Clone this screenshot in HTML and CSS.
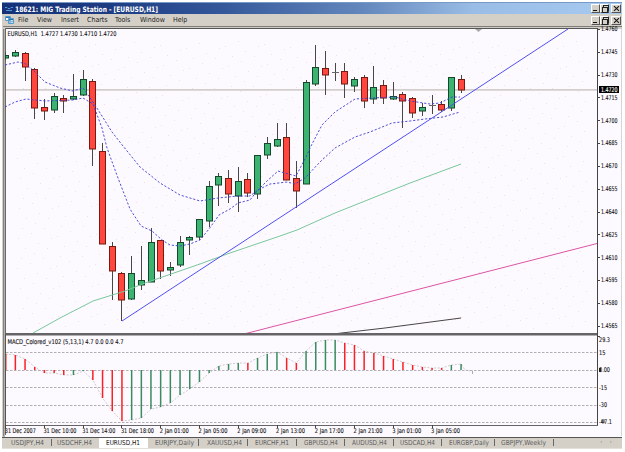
FILE: index.html
```html
<!DOCTYPE html>
<html lang="en">
<head>
<meta charset="utf-8">
<title>18621: MIG Trading Station</title>
<link rel="stylesheet" href="styles.css">
</head>
<body>
<div class="window">
  <header class="titlebar">
    <svg class="logo" width="8" height="6" viewBox="0 0 8 6"><path d="M0 1.5h2l1 1h2l1-1h2M1 4.5h6" stroke="#5594d8" fill="none"/></svg>
    <h1><svg width="150" height="11"><text x="0" y="8.5" textLength="143" lengthAdjust="spacingAndGlyphs">18621: MIG Trading Station - [EURUSD,H1]</text></svg></h1>
    <div class="controls"><button class="min"></button><button class="restore"></button><button class="close"></button></div>
  </header>
  <nav class="menubar">
    <svg class="app-icon" width="9" height="10" viewBox="0 0 9 10"><path d="M.5 1.5h5v4h-5zM3.5 3.5h5v5h-5z" fill="#fff" stroke="#529bce"/><path d="M1 2.5h4M4 4.5h4M5 6v2M7 5.5v2" stroke="#286fae"/></svg>
    <span class="m-file">File</span><span class="m-view">View</span><span class="m-insert">Insert</span><span class="m-charts">Charts</span><span class="m-tools">Tools</span><span class="m-window">Window</span><span>Help</span>
    <div class="controls"><button class="min"></button><button class="restore"></button><button class="close"></button></div>
  </nav>
  <main><svg id="chart" width="620" height="411" viewBox="2 26 620 411"></svg></main>
  <footer class="tabs" id="tabs"></footer>
</div>
<script src="chart.js"></script>
</body>
</html>
```
FILE: styles.css
```css
* { box-sizing: border-box; }
body { margin: 0; background: #fff; font-family: "DejaVu Sans Condensed", "DejaVu Sans", sans-serif; }
.window { margin: 2px 0 0 2px; width: 620px; height: 448px; display: flex; flex-direction: column; }
.titlebar { height: 12px; display: flex; align-items: center; border-top: 1px solid #7898c5; padding: 0 1px 0 3px; background: linear-gradient(90deg, #153278 0%, #1d3c82 17%, #34579a 35%, #6387bc 58%, #9abde6 76%, #a6caf0 100%); }
.logo { margin-right: 2px; }
h1 { margin: 0; height: 11px; display: flex; flex: 1; }
h1 svg { overflow: visible; }
h1 text { font: bold 7.4px "DejaVu Sans Condensed", sans-serif; fill: #fff; }
.menubar { height: 12px; display: flex; align-items: center; padding: 0 1px 0 3px; background: #d4d0c8; color: #222; font-size: 7px; }
.menubar span { white-space: nowrap; height: 9px; line-height: 8px; }
.app-icon { margin-right: 4px; }
.m-file { width: 19px; }
.m-view { width: 24px; }
.m-insert { width: 26px; }
.m-charts { width: 28px; }
.m-tools { width: 25px; }
.m-window { width: 33px; }
.controls { display: flex; margin-left: auto; gap: 0; }
.controls button { width: 9px; height: 9px; padding: 0; border: 1px solid; border-color: #fff #555 #555 #fff; background: #d4d0c8; position: relative; }
.controls .close { margin-left: 2px; width: 10px; }
.min::before { content: ""; position: absolute; left: 1px; bottom: 1px; width: 4px; height: 1px; background: #111; }
.restore::before, .restore::after { content: ""; position: absolute; width: 4px; height: 4px; border: 1px solid #222; background: #d4d0c8; left: 2px; top: 0; }
.restore::after { left: 1px; top: 2px; }
.close::before, .close::after { content: ""; position: absolute; width: 7px; height: 1px; background: #111; left: 0.5px; top: 3px; transform: rotate(45deg); }
.close::after { transform: rotate(-45deg); }
main { height: 411px; display: flex; }
#chart text { font: 6.5px "DejaVu Sans Condensed", sans-serif; fill: #151515; stroke: #151515; stroke-width: 0.12px; }
#chart .current { fill: #fff; stroke: #fff; }
.tabs { height: 12px; display: flex; border-top: 1px solid #555; background: #d4d0c8; border-bottom: 1px solid #e3e0dc; }
.tabs svg { display: block; }
.tabs text { font: 6.8px "DejaVu Sans Condensed", sans-serif; fill: #5c5c5c; }
.tabs .active text { fill: #111; }
.tabs .active { background: #fff; }
.arrows { margin-left: auto; width: 22px; display: flex; gap: 7px; color: #999; font-size: 7px; line-height: 9px; }
```
FILE: chart.js
```js
const svg = document.getElementById('chart');
const out = [];
const xAt = i => 5.7 + 9.69 * i;
const line = (x1, y1, x2, y2, c, extra = '') => out.push(`<line x1="${x1}" y1="${y1}" x2="${x2}" y2="${y2}" stroke="${c}" ${extra}/>`);
const rect = (x, y, w, h, c, extra = '') => out.push(`<rect x="${x}" y="${y}" width="${w}" height="${h}" fill="${c}" ${extra}/>`);
const text = (x, y, w, s, cls = '') => out.push(`<text x="${x}" y="${y}" textLength="${w}" lengthAdjust="spacingAndGlyphs" class="${cls}">${s}</text>`);

// frame and background
rect(2, 26, 620, 411, '#fdfaff');
rect(2, 26, 3, 411, '#b5b2ad');
rect(2, 26, 1, 411, '#d4d0c8');
rect(3, 26, 1, 410, '#85827f');
rect(3, 26, 619, 3, '#d0cdc8');
rect(3, 26, 619, 1, '#807d79');
rect(5, 28, 593, 1, '#555');
rect(5, 28, 1, 407, '#6a6868');
rect(621, 29, 1, 407, '#d6d4d8');

// speckled backdrop
for (let r = 0; r < 29; r++) for (let c = 0; c < 44; c++) {
  const x = 17 + c * 13 + (r * 7) % 11, y = 48 + r * 10 - (c * 5) % 13;
  if (x < 595 && y > 40 && y < 332) rect(x, y, 1, 1, '#f9dce9');
}

// current price
rect(6, 89, 591, 1, '#d2cecc');
rect(6, 90, 591, 1, '#dedada');

// high, low, body top, body bottom, direction
const candles = [
[52,60,55,58,1],[50,57,52,56,1],[52,81,53,67,0],[68,119,69,108,0],[99,120,107,111,0],[93,113,96,110,1],[95,113,98,101,0],[74,100,96,99,1],[70,96,79,95,1],[79,166,81,149,0],
[143,244,151,244,0],[242,300,246,271,0],[272,321,273,300,0],[256,300,273,299,1],[246,290,280,285,1],[228,282,242,282,1],[240,279,240,271,0],[262,276,267,270,1],[236,267,242,265,1],[236,255,237,240,1],
[219,240,219,237,1],[181,227,186,221,1],[173,206,176,185,1],[170,203,178,194,0],[167,212,181,196,1],[173,197,179,193,0],[155,199,155,194,1],[137,159,143,155,1],[123,147,139,146,1],[123,180,137,180,0],
[161,208,178,191,0],[80,184,82,184,1],[45,86,67,84,1],[51,95,68,75,0],[63,81,72,73,1],[63,98,71,84,0],[77,92,79,86,1],[75,108,77,101,0],[66,104,87,99,1],[80,104,85,98,0],
[82,100,96,99,1],[92,128,94,101,0],[97,118,98,113,0],[103,116,107,111,1],[95,114,105,106,1],[101,112,104,110,0],[77,111,77,108,1],[75,93,79,90,0]];
candles.forEach(([h, l, t, b, up], i) => {
  const x = Math.round(xAt(i) - 0.5);
  rect(x, h, 1, l - h, '#4a4644');
  if (b - t < 2) { rect(x - 3, t, 7, 1, '#6b6764'); return; }
  const left = Math.max(5.5, x - 2.5), right = x + 3.5;
  rect(left, t + 0.5, right - left, b - t - 0.5, up ? '#3cb371' : '#ff4740', `stroke="${up ? '#14472b' : '#751b10'}"`);
});

// averages and trend lines
const poly = (pts, c, extra = '') => out.push(`<polyline points="${pts}" fill="none" stroke="${c}" ${extra}/>`);
const dash = 'stroke-dasharray="2.2 1.8" stroke-width=".9"';
poly('5,65 18,62 26,64 35,72 45,82 60,88 73,91 83,88 93,102 102,116 112,132 123,146 140,167 160,183 180,195 200,201 218,198 238,196 250,196 258,190 270,184 287,182 295,184 305,178 320,162 335,148 355,137 370,132 392,123 410,121 425,119 443,117 460,112', '#3c3cd0', dash);
poly('5,107 15,102 26,99 45,101 73,100 83,98 93,104 102,128 107,148 118,178 130,209 141,226 152,231 162,240 170,245 180,246 190,244 200,240 209,229 219,215 230,209 238,203 250,200 257,191 267,181 278,171 285,173 296,176 306,157 311,146 322,125 335,112 355,99 372,98 395,97 410,101 430,104 440,103 452,97 460,97', '#3c3cd0', dash);
poly('33,333 60,318 93,301 125,291 145,283 200,264 230,253 280,236 297,230 335,213 380,195 410,183 461,164', '#79c79b');
poly('122,321 568,29', '#5050f0');
poly('244,334 597,243.5', '#dc55a4');
poly('333,334 385,328 461,318', '#494545');
out.push('<path d="M475 29h7l-3.5 3z" fill="#aaa"/>');

// lower pane
rect(5, 333, 593, 2.5, '#666466');
for (const y of [352, 370, 387, 405, 422]) line(6, y + 0.5, 597, y + 0.5, '#9f9b9f', 'stroke-dasharray="2.5 1.5" stroke-width=".8"');
const macd = [354,355,359,367,373,373,375,375,371,380,398,411,421,420,418,409,407,403,395,389,382,373,366,364,363,363,358,354,352,358,363,351,342,340,340,343,345,351,353,356,359,362,365,367,368,368,365,364];
const reds = new Set([0,1,2,3,4,5,6,9,10,11,12,25,29,30,35,36,37,38,39,40,41,42,43,44,45]);
poly(macd.map((v, i) => `${xAt(i)},${v}`).join(' ') + ' 465,370 472,371', '#b9b4b4', 'stroke-dasharray="2 1.5" stroke-width=".7"');
macd.forEach((v, i) => rect(Math.max(5, xAt(i) - 0.8).toFixed(1), Math.min(v, 370), 1.5, Math.abs(370 - v), reds.has(i) ? '#fb2026' : '#398b60'));
rect(472, 371, 1, 3, '#aaa');

// axes
rect(597, 28, 1, 398, '#444');
rect(5, 425, 593, 1, '#666369');
rect(5, 334, 1, 92, '#555');
for (let i = 0; i < 14; i++) {
  const y = 29 + i * 22.83;
  rect(598, Math.round(y), 2, 1, '#444');
  text(601, y + 2.3, 16.5, (1.476 - i * 0.0015).toFixed(4));
}
rect(599, 86, 20, 7, '#000');
text(601, 92, 16.5, '1.4720', 'current');
text(599, 342, 11, '29.3'); text(599, 355, 6.5, '15'); text(599, 372.3, 11, '0.00'); rect(599, 368, 2, 4, '#222');
text(599, 389.7, 8, '-15'); text(599, 407.3, 8, '-30'); text(599, 424, 13, '-47.1'); rect(601, 419.5, 4, 3.5, '#333', 'opacity=".5"');
rect(598, 336, 2, 1, '#444');
text(7.5, 36, 109, 'EURUSD,H1&#160; 1.4727 1.4730 1.4710 1.4720');
text(7.5, 344, 116, 'MACD_Colored_v102 (5,13,1) 4.7 0.0 0.0 4.7');
['31 Dec 2007','31 Dec 10:00','31 Dec 14:00','31 Dec 18:00','2 Jan 01:00','2 Jan 05:00','2 Jan 09:00','2 Jan 13:00','2 Jan 17:00','2 Jan 21:00','3 Jan 01:00','3 Jan 05:00'].forEach((s, i) => {
  rect(Math.round(xAt(i * 4) - 0.5), 425, 1, 3, '#444');
  text((4.8 + i * 38.75).toFixed(1), 433, i === 0 ? 31 : i < 4 ? 33 : 29, s);
});
svg.innerHTML = out.join('');

// name, cell width, text inset, text width
const tabs = [['USDJPY,H4',50,9,33],['USDCHF,H4',47,5,35],['EURUSD,H1',49,7,34],['EURJPY,Daily',51,7,39],['XAUUSD,H4',49,8,35],['EURCHF,H1',49,7,34],['GBPUSD,H4',48,7,34],['AUDUSD,H4',49,7,35],['USDCAD,H4',48,6,35],['EURGBP,Daily',53,7,40],['GBPJPY,Weekly',59,6,45]];
document.getElementById('tabs').innerHTML = tabs.map(([s, w, p, tw], i) =>
  `<div class="${i === 2 ? 'active' : ''}"><svg width="${w}" height="10"><text x="${p}" y="7.2" textLength="${tw}" lengthAdjust="spacingAndGlyphs">${s}</text>${i === 1 || i === 2 ? '' : `<rect x="${w - 1}" y="1" width="1" height="7" fill="#666"/>`}</svg></div>`).join('') + '<div class="arrows"><span>‹</span><span>›</span></div>';
```
